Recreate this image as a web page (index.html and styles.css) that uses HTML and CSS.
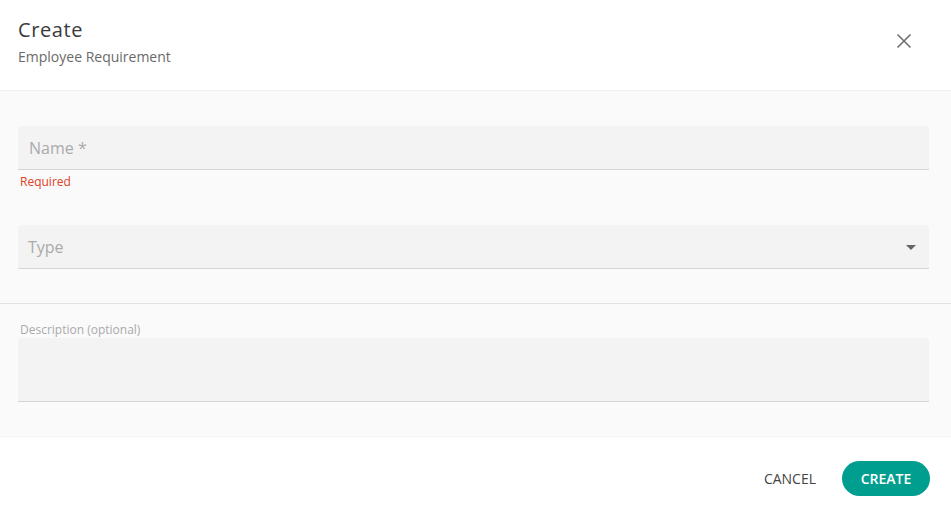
FILE: index.html
```html
<!DOCTYPE html>
<html lang="en">
<head>
  <meta charset="UTF-8">
  <meta name="viewport" content="width=device-width, initial-scale=1.0">
  <title>Create Employee Requirement</title>
  <link rel="stylesheet" href="styles.css">
</head>
<body>

  <div class="dialog">
    <!-- Header -->
    <div class="dialog-header">
      <div class="dialog-titles">
        <h2>Create</h2>
        <p>Employee Requirement</p>
      </div>
      <button type="button" class="btn-close" aria-label="Close">
        <svg width="24" height="24" viewBox="0 0 24 24">
          <path d="M5.5 5.5l13 13M18.5 5.5l-13 13" stroke="#6f6f6f" stroke-width="1.6" fill="none"/>
        </svg>
      </button>
    </div>

    <!-- Main fields -->
    <form class="dialog-body">
      <div class="section">
        <div class="form-group">
          <div class="field">
            <input type="text" id="name" name="name" placeholder="Name *">
          </div>
          <div class="error-message">Required</div>
        </div>

        <div class="form-group">
          <div class="field select-field">
            <span class="placeholder">Type</span>
            <svg class="arrow" width="24" height="24" viewBox="0 0 24 24">
              <path d="M7 10l5 5 5-5z" fill="#666"/>
            </svg>
          </div>
        </div>
      </div>

      <!-- Description -->
      <div class="section section-description">
        <label for="description">Description (optional)</label>
        <div class="field textarea-field">
          <textarea id="description" name="description"></textarea>
        </div>
      </div>
    </form>

    <!-- Footer -->
    <div class="dialog-footer">
      <button type="button" class="btn-cancel">CANCEL</button>
      <button type="submit" class="btn-create">CREATE</button>
    </div>
  </div>

</body>
</html>
```

FILE: styles.css
```css
body {
  margin: 0;
  font-family: "Open Sans", Arial, sans-serif;
  background-color: #fff;
  color: #333;
}

.dialog {
  width: 100%;
  height: 519px;
  display: flex;
  flex-direction: column;
  background-color: white;
}

/* Header */
.dialog-header {
  display: flex;
  justify-content: space-between;
  align-items: flex-start;
  height: 91px;
  box-sizing: border-box;
  padding: 18px 35px 0 18px;
  border-bottom: 1px solid #eeeeee;
}

.dialog-titles h2 {
  margin: 0;
  font-size: 20px;
  line-height: 24px;
  font-weight: 400;
  letter-spacing: 0.6px;
  color: #3a3a3a;
}

.dialog-titles p {
  margin: 5px 0 0;
  font-size: 14px;
  line-height: 20px;
  color: #6a6a6a;
}

.btn-close {
  margin-top: 11px;
  padding: 0;
  border: none;
  background: none;
  width: 24px;
  height: 24px;
  cursor: pointer;
}

/* Body */
.dialog-body {
  margin: 0;
  background-color: #fafafa;
}

.section {
  padding: 35px 22px 34px 18px;
}

.section + .section {
  border-top: 1px solid #e2e2e2;
}

.section-description {
  padding-top: 19px;
}

.form-group + .form-group {
  margin-top: 35px;
}

.field {
  display: flex;
  align-items: center;
  height: 44px;
  box-sizing: border-box;
  background-color: #f3f3f3;
  border-bottom: 1px solid #d5d5d5;
  border-radius: 4px 4px 0 0;
}

.field input {
  width: 100%;
  height: 100%;
  box-sizing: border-box;
  padding: 0 11px;
  border: none;
  background: transparent;
  font-family: inherit;
  font-size: 16px;
  color: #333;
  outline: none;
}

.field input::placeholder {
  color: #aaa;
}

.error-message {
  margin-top: 4px;
  padding-left: 2px;
  font-size: 12px;
  line-height: 16px;
  color: #e0401c;
}

.select-field {
  justify-content: space-between;
  padding: 0 6px 0 10px;
}

.placeholder {
  font-size: 16px;
  color: #aaa;
}

label {
  display: block;
  padding-left: 2px;
  font-size: 12px;
  line-height: 14px;
  color: #aaa;
  margin-bottom: 1px;
}

.textarea-field {
  height: 64px;
}

.textarea-field textarea {
  width: 100%;
  height: 100%;
  box-sizing: border-box;
  padding: 8px 11px;
  border: none;
  background: transparent;
  font-family: inherit;
  font-size: 14px;
  resize: none;
  outline: none;
}

/* Footer */
.dialog-footer {
  flex: 1;
  display: flex;
  justify-content: flex-end;
  align-items: flex-start;
  gap: 10px;
  padding: 24px 21px 0 0;
  border-top: 1px solid #f2f2f2;
}

.btn-cancel,
.btn-create {
  height: 35px;
  border: none;
  font-family: inherit;
  font-size: 14px;
  cursor: pointer;
}

.btn-cancel {
  padding: 0 16px;
  background: none;
  color: #444;
}

.btn-create {
  width: 88px;
  padding: 0;
  border-radius: 18px;
  background-color: #009e8f;
  color: white;
  font-weight: 600;
}
```
